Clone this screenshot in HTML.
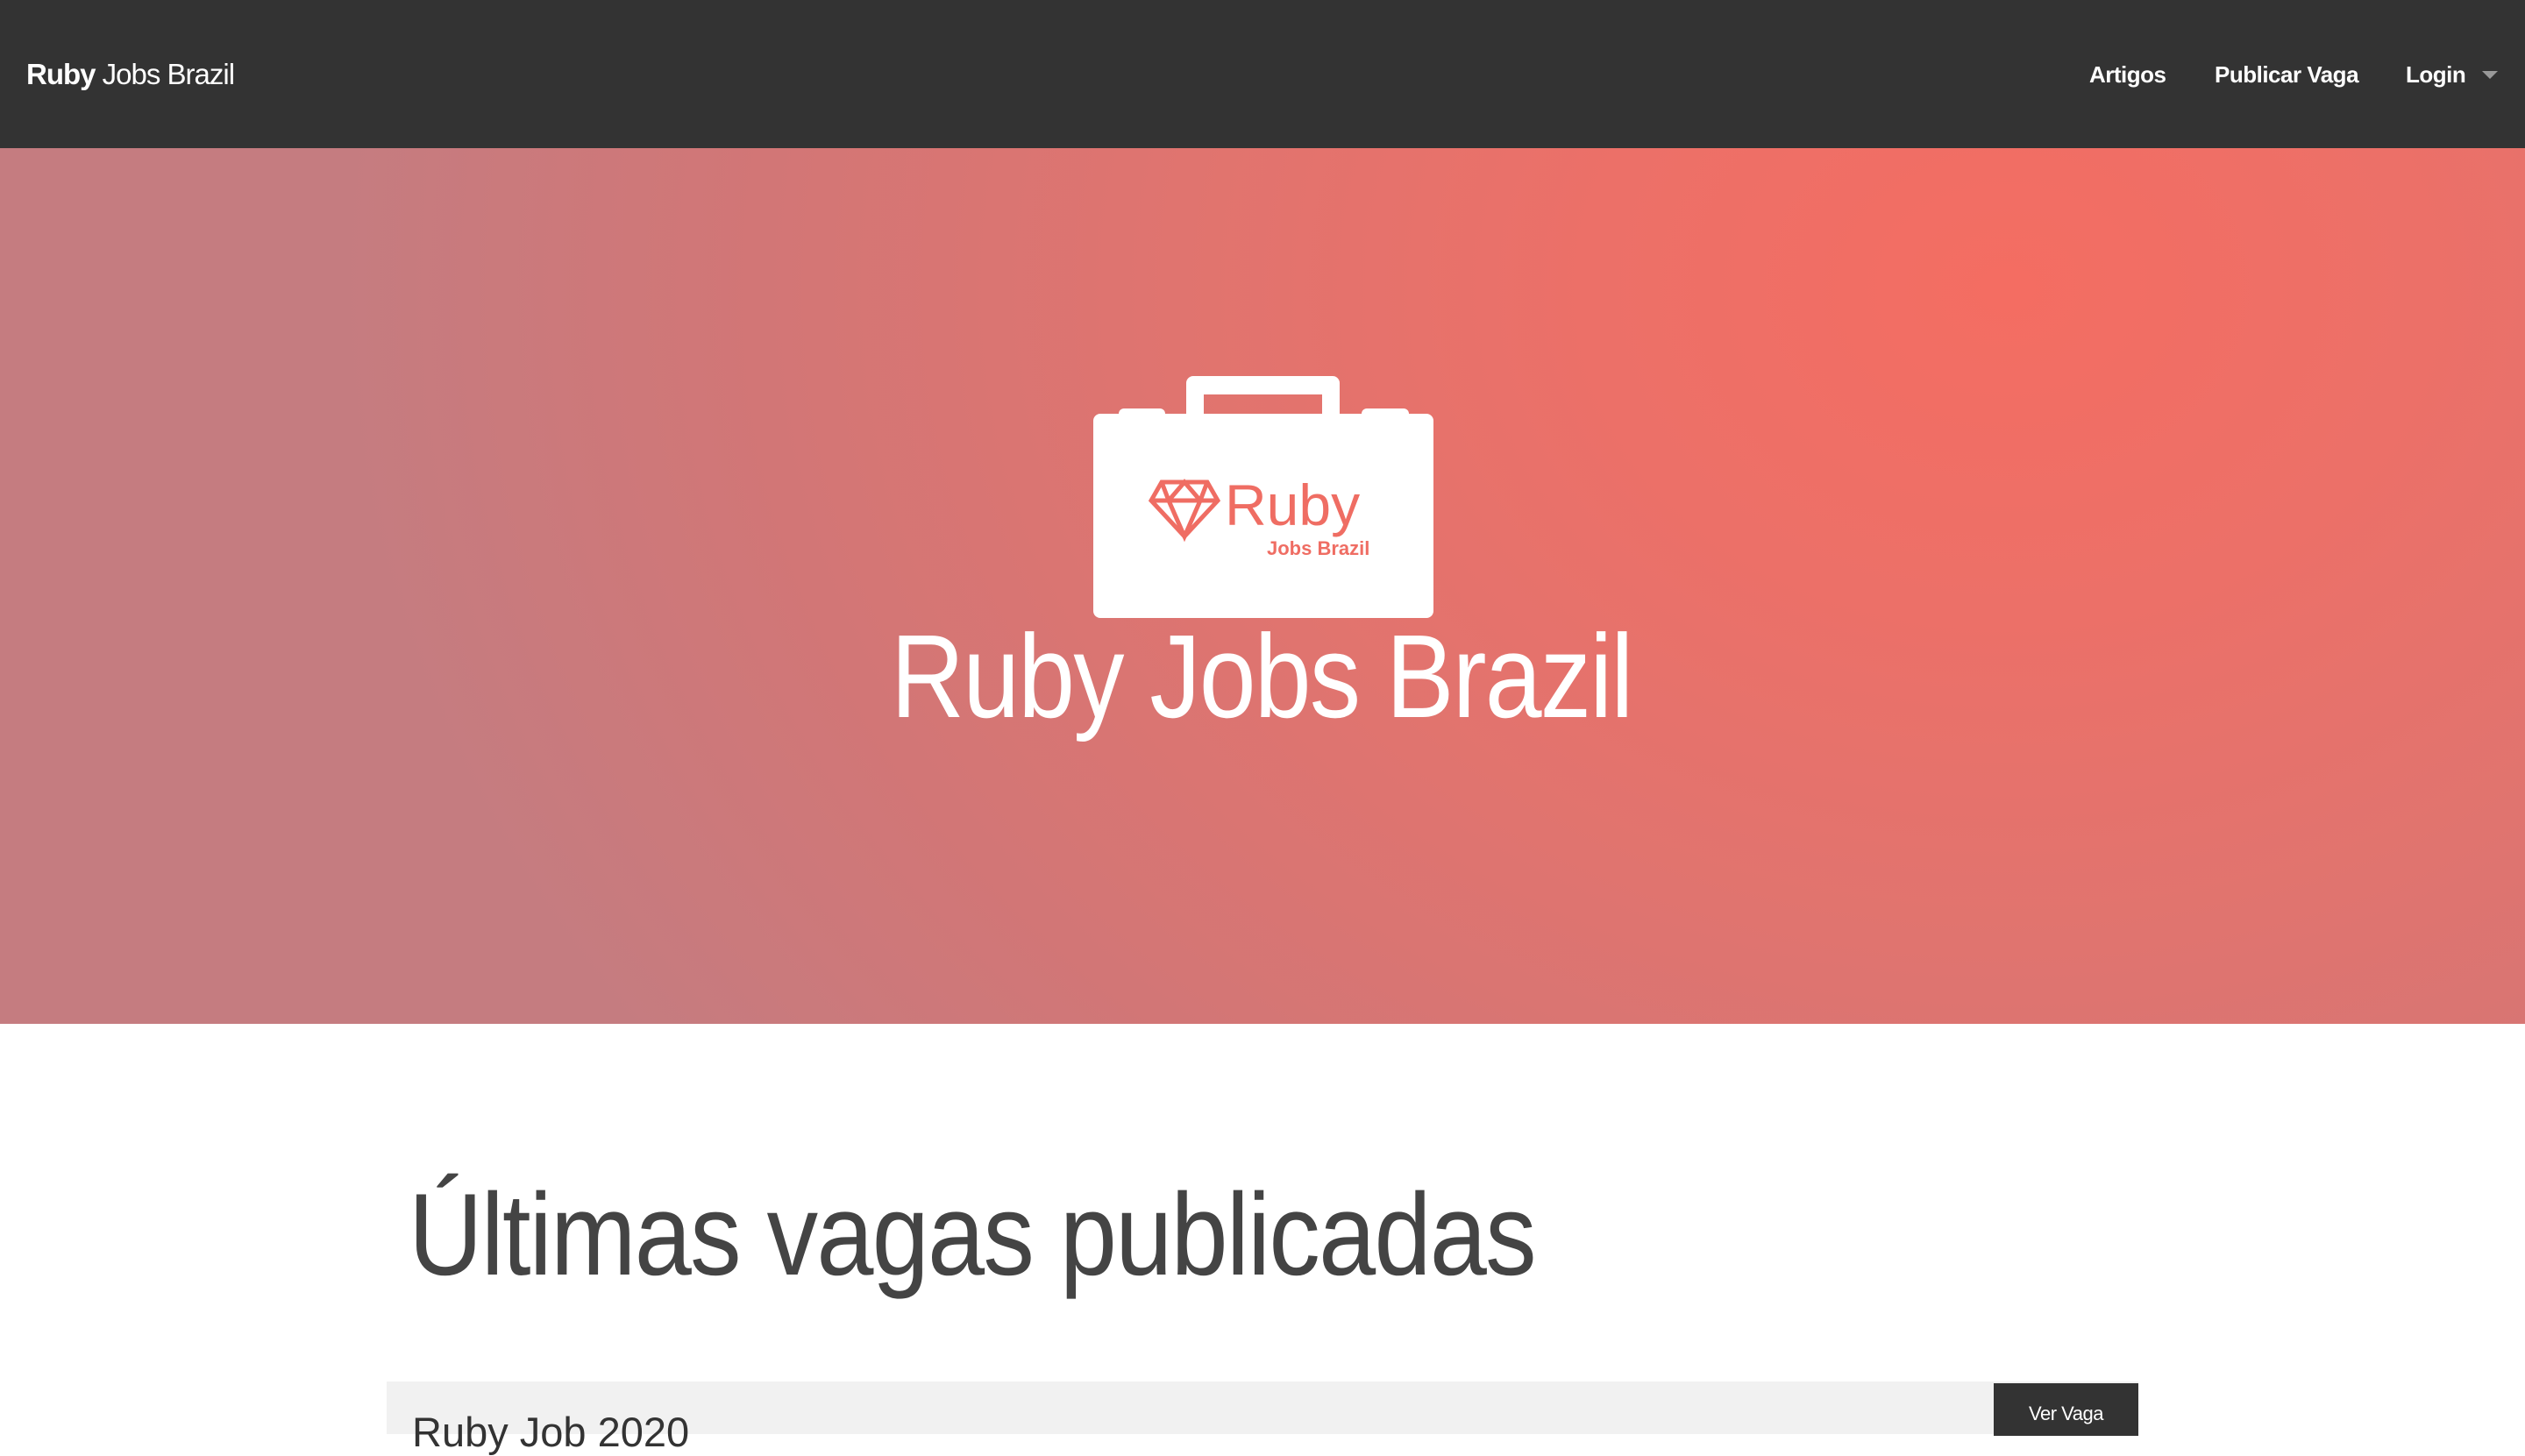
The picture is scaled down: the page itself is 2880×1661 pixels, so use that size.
<!DOCTYPE html>
<html><head><meta charset="utf-8"><style>
*{margin:0;padding:0;box-sizing:border-box}
html,body{width:2880px;height:1622px;overflow:hidden;background:#fff;font-family:"Liberation Sans",Arial,sans-serif}
.nav{position:absolute;left:0;top:0;width:2880px;height:169px;background:#333}
.brand{position:absolute;left:30px;top:66px;font-size:33px;color:#fff;letter-spacing:-1px}
.brand b{font-weight:bold}
.brand span{font-weight:300}
.ni{position:absolute;top:70px;font-size:26px;font-weight:bold;color:#fff;letter-spacing:-0.5px}
.caret{position:absolute;left:2831px;top:81px;width:0;height:0;border-left:9px solid transparent;border-right:9px solid transparent;border-top:9px solid #999}
.hero{position:absolute;left:0;top:169px;width:2880px;height:999px;
background:radial-gradient(ellipse 1900px 1500px at 2290px 160px,#f46d62 0%,#ec7068 25%,#e0746f 50%,#d27676 75%,#c57c80 100%);}
.title{position:absolute;left:1016px;top:694px;font-size:135px;font-weight:300;color:#fff;white-space:nowrap;transform:scaleX(0.862);transform-origin:left top;letter-spacing:-2px}
.h2{position:absolute;left:466px;top:1333px;font-size:133px;font-weight:300;color:#444;white-space:nowrap;transform:scaleX(0.88);transform-origin:left top;letter-spacing:-2px}
.card{position:absolute;left:441px;top:1576px;width:1998px;height:60px;background:#f1f1f1}
.card .t{position:absolute;left:29px;top:30px;font-size:47px;color:#333;font-weight:300}
.btn{position:absolute;left:2274px;top:1578px;width:165px;height:60px;background:#333;color:#fff;font-size:22px;text-align:center;padding-top:22px;letter-spacing:-0.5px}
</style></head><body>
<div class="nav">
<div class="brand"><b>Ruby</b> <span>Jobs Brazil</span></div>
<div class="ni" style="left:2383px">Artigos</div>
<div class="ni" style="left:2526px">Publicar Vaga</div>
<div class="ni" style="left:2744px">Login</div>
<div class="caret"></div>
</div>
<div class="hero"></div>
<svg style="position:absolute;left:0;top:0" width="2880" height="1168">
<path fill="#fff" fill-rule="evenodd" d="M1361 429h159a8 8 0 0 1 8 8v35h-20v-22h-135v22h-20v-35a8 8 0 0 1 8-8z"/>
<rect x="1276" y="466" width="53" height="12" rx="6" fill="#fff"/>
<rect x="1553" y="466" width="54" height="12" rx="6" fill="#fff"/>
<rect x="1247" y="472" width="388" height="233" rx="8" fill="#fff"/>
<g fill="none" stroke="#ef6d63" stroke-width="5" stroke-linejoin="miter">
<path d="M1325 550h52l12 21-38 41-38-41z"/>
<path d="M1313 571h76M1325 550l8 21 18 41 18-41 8-21M1333 571l18-21 18 21"/>
</g>
<text x="1397" y="599" font-family="Liberation Sans,Arial,sans-serif" font-size="66" fill="#ef6d63">Ruby</text>
<text x="1445" y="633" font-family="Liberation Sans,Arial,sans-serif" font-size="22" font-weight="bold" fill="#ef6d63">Jobs Brazil</text>
</svg>
<div class="title">Ruby Jobs Brazil</div>
<div class="h2">Últimas vagas publicadas</div>
<div class="card"><div class="t">Ruby Job 2020</div></div>
<div class="btn">Ver Vaga</div>
</body></html>
